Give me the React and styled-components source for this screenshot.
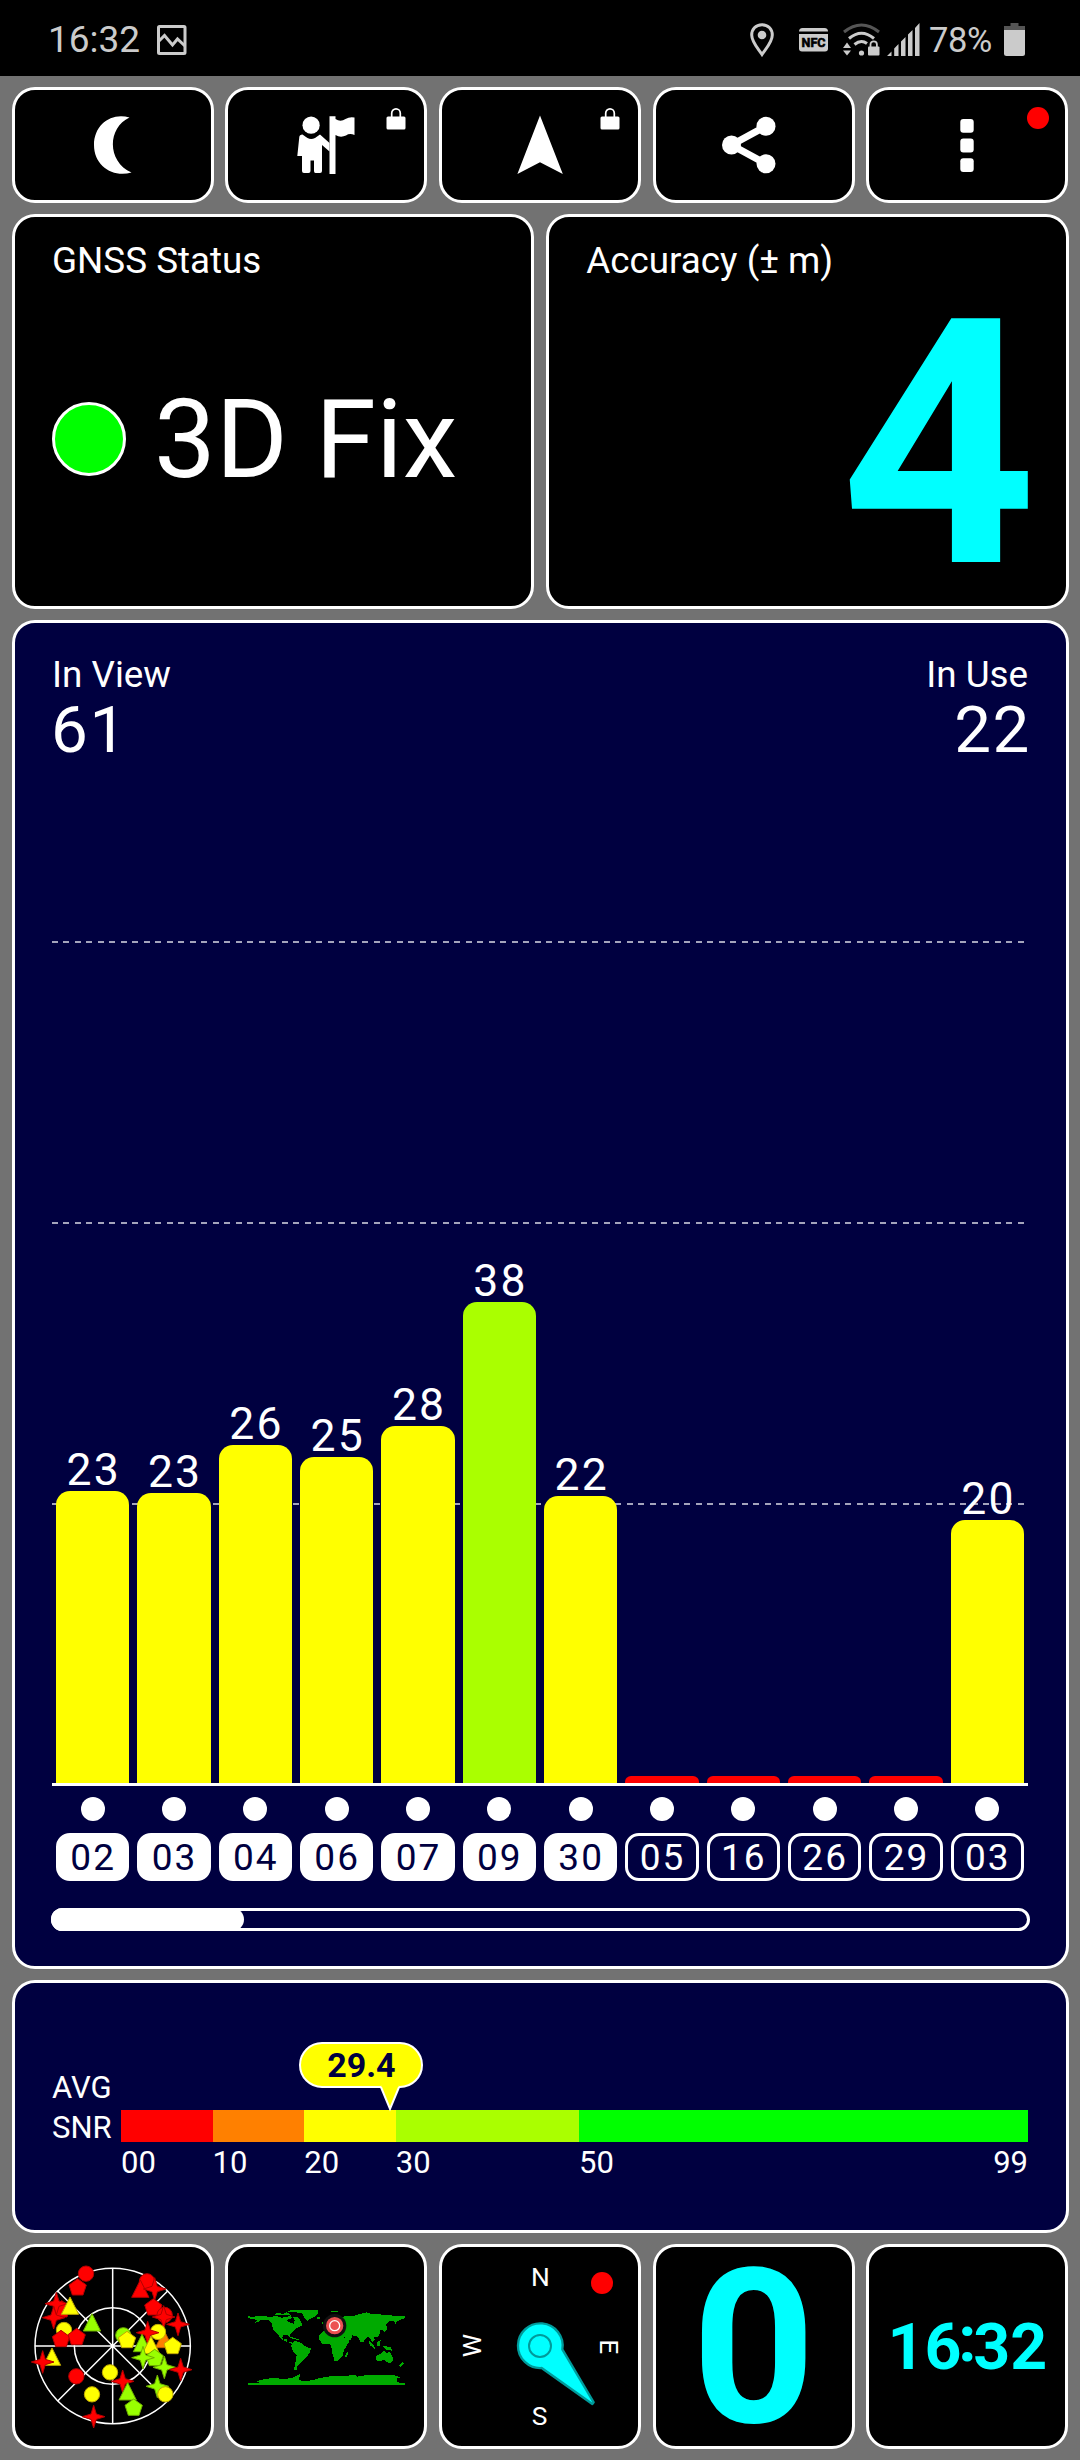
import React from 'react';
import styled, { createGlobalStyle } from 'styled-components';

const GlobalStyle = createGlobalStyle`
    * {
        box-sizing: border-box;
    }

    body {
        margin: 0;
        background: #727272;
        color: white;
        font-family: Roboto, "Liberation Sans", sans-serif;
    }

    svg {
        display: block;
        flex: none;
    }
`;

const Screen = styled.div`
    width: 1080px;
    height: 2460px;
    background: #727272;
`;

const StatusBar = styled.header`
    display: flex;
    align-items: center;
    height: 76px;
    padding: 3px 55px 0 48px;
    background: black;
    color: #cbcbcb;
    font-size: 37px;
    line-height: 44px;
`;

const StatusGroup = styled.div`
    display: flex;
    align-items: center;
    margin-left: ${props => props.$end ? 'auto' : '0'};
`;

const StatusIcon = styled.svg`
    margin-left: ${props => props.$gap}px;
`;

const Percent = styled.span`
    width: 64px;
    margin-left: 9px;
    font-size: 34.5px;
    letter-spacing: -0.4px;
    white-space: nowrap;
`;

const Page = styled.main`
    display: flex;
    flex-direction: column;
    gap: 11px;
    padding: 11px 11.5px;
`;

const Row = styled.section`
    display: grid;
    grid-template-columns: repeat(${props => props.$columns}, 1fr);
    grid-template-rows: minmax(0, 1fr);
    gap: 11.5px;
    height: ${props => props.$height}px;
`;

const Tile = styled.div`
    position: relative;
    display: flex;
    align-items: center;
    justify-content: center;
    border: 3px solid white;
    border-radius: 23px;
    background: black;
`;

const Lock = styled.svg`
    position: absolute;
    top: 18px;
    right: 18px;
`;

const Alert = styled.i`
    position: absolute;
    top: ${props => props.$top}px;
    right: ${props => props.$right}px;
    width: 22px;
    height: 22px;
    border-radius: 50%;
    background: #f00;
`;

const Card = styled(Tile)`
    display: block;
    height: ${props => props.$height ? `${props.$height}px` : 'auto'};
    padding: ${props => props.$top}px 37.5px 0;
    background: ${props => props.$navy ? '#000040' : 'black'};
`;

const Label = styled.div`
    font-size: 36.8px;
    line-height: 40px;
`;

const FixRow = styled.div`
    display: flex;
    align-items: center;
    height: 130px;
    margin-top: 93px;
    font-size: 110px;
    line-height: 130px;
    white-space: nowrap;
`;

const FixText = styled.span`
    padding-top: 2px;
`;

const FixLight = styled.div`
    width: 74px;
    height: 74px;
    margin-right: 28px;
    border: 3px solid white;
    border-radius: 50%;
    background: #0f0;
`;

const Accuracy = styled.div`
    color: #0ff;
    font-size: 343px;
    font-weight: bold;
    line-height: 328px;
    text-align: right;
    margin-right: -9px;
`;

const ChartHead = styled.div`
    display: flex;
    justify-content: space-between;
    height: 109px;
`;

const Count = styled.div`
    text-align: ${props => props.$end ? 'right' : 'left'};
`;

const CountValue = styled.div`
    margin: 0 -3px 0 -1px;
    font-size: 65.5px;
    line-height: 70px;
    letter-spacing: 1.6px;
`;

const Plot = styled.div`
    position: relative;
    height: 1022px;
    border-bottom: 3px solid white;
`;

const GridLine = styled.div`
    position: absolute;
    left: 0;
    right: 0;
    bottom: ${props => props.$bottom}px;
    height: 2px;
    background: repeating-linear-gradient(90deg, #a4a4bc 0 6px, transparent 6px 11.5px);
`;

const Columns = styled.div`
    position: relative;
    display: grid;
    grid-template-columns: repeat(12, 1fr);
    height: ${props => props.$tall ? '100%' : 'auto'};
`;

const Column = styled.div`
    display: flex;
    flex-direction: column;
    align-items: center;
    justify-content: flex-end;
    padding: 0 4px;
`;

const BarValue = styled.div`
    height: 51px;
    margin-right: -2.2px;
    font-size: 44.5px;
    line-height: 60px;
    letter-spacing: 2.2px;
`;

const Bar = styled.div`
    width: 100%;
    border-radius: ${props => props.$low ? '6px 6px 0 0' : '14px 14px 0 0'};
    background: ${props => props.color};
`;

const Dot = styled.div`
    width: 24px;
    height: 24px;
    margin: 11px 0 11.5px;
    border-radius: 50%;
    background: white;
`;

const SatId = styled.div`
    width: 100%;
    height: 48px;
    padding-left: 1px;
    border: 3px solid white;
    border-radius: 14px;
    background: ${props => props.$used ? 'white' : 'transparent'};
    color: ${props => props.$used ? '#000040' : 'white'};
    font-size: 37px;
    line-height: 43px;
    letter-spacing: 2px;
    text-align: center;
`;

const ScrollTrack = styled.div`
    height: 23px;
    margin: 27px -1.5px 0;
    border: 3px solid white;
    border-radius: 12px;
`;

const ScrollThumb = styled.div`
    width: 193px;
    height: 23px;
    margin: -3px;
    border-radius: 12px;
    background: white;
`;

const SnrRow = styled.div`
    display: flex;
    font-size: 31px;
    line-height: 40px;
`;

const SnrTitle = styled.div`
    width: 69px;
    flex: none;
    padding-top: 0.8px;
`;

const Scale = styled.div`
    position: relative;
    display: flex;
    flex: 1;
    padding-top: 43px;
`;

const Segment = styled.div`
    flex: ${props => props.$span} 0 0;
`;

const SegmentFill = styled.div`
    height: 32px;
    background: ${props => props.color};
`;

const SegmentTicks = styled.div`
    display: flex;
    justify-content: space-between;
    padding-top: 1px;
`;

const Bubble = styled.div`
    position: absolute;
    top: -25px;
    width: 124px;
    height: 46px;
    transform: translateX(-91px);
    border: 2px solid white;
    border-radius: 23px;
    background: #ff0;
    color: #000040;
    font-size: 34px;
    font-weight: bold;
    line-height: 42px;
    text-align: center;
`;

const BubbleTail = styled.svg`
    position: absolute;
    top: 40px;
    left: 78px;
`;

const Speed = styled.div`
    padding-top: 5px;
    color: #0ff;
    font-size: 215px;
    font-weight: bold;
    line-height: 190px;
`;

const Clock = styled.div`
    color: #0ff;
    font-size: 64.5px;
    font-weight: bold;
    line-height: 74px;
    white-space: nowrap;
`;

const Colon = styled.span`
    display: inline-block;
    margin: 0 -3.3px;
    line-height: 0;
    transform: translateY(-0.12em);
`;

const satellites = [
    { id: '02', snr: 23, height: 292, color: '#ff0', used: true },
    { id: '03', snr: 23, height: 290, color: '#ff0', used: true },
    { id: '04', snr: 26, height: 338, color: '#ff0', used: true },
    { id: '06', snr: 25, height: 326, color: '#ff0', used: true },
    { id: '07', snr: 28, height: 357, color: '#ff0', used: true },
    { id: '09', snr: 38, height: 481, color: '#af0', used: true },
    { id: '30', snr: 22, height: 287, color: '#ff0', used: true },
    { id: '05', height: 7, color: '#f00' },
    { id: '16', height: 7, color: '#f00' },
    { id: '26', height: 7, color: '#f00' },
    { id: '29', height: 7, color: '#f00' },
    { id: '03', snr: 20, height: 263, color: '#ff0' },
];

const segments = [
    { from: '00', span: 10, color: '#f00' },
    { from: '10', span: 10, color: '#ff8000' },
    { from: '20', span: 10, color: '#ff0' },
    { from: '30', span: 20, color: '#af0' },
    { from: '50', span: 49, color: '#0f0', to: '99' },
];

const RED = '#f00';
const YELLOW = '#ff0';
const LIME = '#9f0';

// shape, x, y, color - drawn in this order
const sky = [
    ['circle', 228, 101, RED], ['penta', 203, 142, RED],
    ['circle', 411, 124, RED], ['tri', 391, 149, RED], ['star', 434, 147, RED],
    ['penta', 155, 208, RED], ['star', 139, 191, RED], ['tri', 180, 200, YELLOW],
    ['star', 131, 233, RED], ['tri', 246, 250, LIME],
    ['circle', 162, 270, YELLOW], ['penta', 153, 297, RED], ['penta', 200, 291, RED],
    ['penta', 430, 202, RED], ['circle', 464, 225, RED], ['star', 461, 231, RED],
    ['star', 504, 253, RED], ['tri', 462, 300, '#ff8000'],
    ['circle', 444, 276, YELLOW], ['star', 413, 278, RED],
    ['circle', 340, 286, LIME], ['penta', 351, 300, YELLOW],
    ['tri', 396, 312, LIME], ['tri', 423, 318, YELLOW], ['penta', 488, 318, YELLOW],
    ['penta', 434, 354, LIME], ['star', 399, 353, LIME], ['star', 463, 382, LIME],
    ['star', 512, 389, RED], ['tri', 126, 353, YELLOW], ['star', 98, 366, RED],
    ['circle', 199, 409, RED], ['circle', 300, 397, YELLOW], ['star', 338, 424, RED],
    ['circle', 246, 463, YELLOW], ['tri', 353, 457, LIME], ['star', 442, 439, LIME],
    ['circle', 466, 463, YELLOW], ['penta', 371, 503, LIME], ['star', 251, 530, RED],
];

const shapes = {
    circle: 'M-23 0a23 23 0 1 0 46 0a23 23 0 1 0 -46 0z',
    penta: 'M0 -26L26 -7L16 23H-16L-26 -7z',
    tri: 'M0 -29L26 23H-26z',
    star: 'M0 -34L8 -8L34 0L8 8L0 34L-8 8L-34 0L-8 -8z',
};

const outline = { [RED]: '#b40000', [YELLOW]: '#c0a800', [LIME]: '#6fb000', '#ff8000': '#c06000' };

function SkyPlot() {
    return (
        <svg width="196" height="199" viewBox="15 21 588 597">
            <g fill="none" stroke="white" strokeWidth="4.5">
                <circle cx="308" cy="318" r="233" />
                <circle cx="308" cy="318" r="115" />
                <path d="M308 85V551M75 318H541M143 153L473 483M473 153L143 483" />
            </g>
            {sky.map(([shape, x, y, color], i) => (
                <path key={i} d={shapes[shape]} transform={`translate(${x} ${y})`}
                    fill={color} stroke={outline[color]} strokeWidth="3" />
            ))}
        </svg>
    );
}

function WorldMap() {
    return (
        <svg width="196" height="199" viewBox="24 21 588 597">
            <g fill="#0a0" shapeRendering="crispEdges">
                <path d="M84 226L92 231H103L108 228H130L150 231L170 228L185 233L200 231L212 226L217 235L207 237L200 242L212 248L222 251L224 240L220 232L230 230L240 240L247 255L238 262L228 264L220 275L210 284L209 293L204 286L190 286L186 292L190 299L200 297L202 305L212 306L220 309L214 311L198 304L182 296L174 284L162 272L156 258L155 248L145 240L125 239L118 244L104 249L112 241L102 238L84 234z" />
                <path d="M160 222L178 219L190 222L200 217L212 222L206 226L188 226L172 226z" />
                <path d="M200 212L240 210H295L292 224L280 232L262 242L254 234L248 221L228 217L205 215z" />
                <path d="M202 290L222 293L240 300L224 298z" />
                <path d="M290 232H300V236H290z" />
                <path d="M215 312L225 303L240 307L255 318L273 326L268 340L258 352L250 360L240 370L232 380L230 390L222 389L226 370L230 345L218 332L214 320z" />
                <path d="M306 276L318 272L320 250L345 234L375 229L392 228L410 226L418 222L440 217L455 222L480 223L500 226L530 227L555 228V235L542 239L530 246L526 252L522 242L508 243L498 252L502 266L494 275L486 268L480 272L478 285L472 292L462 291L464 300L456 306L450 294L443 290L434 298L430 308L422 306L414 290L402 288L396 284L394 298L382 303L372 290L364 280L342 278z" />
                <path d="M298 284L310 275L340 276L365 280L374 294L380 302L389 302L380 318L372 330L368 348L354 362L344 364L338 344L334 320L328 311L308 312L298 300z" />
                <path d="M377 340L384 336L382 350L376 350z" />
                <path d="M446 302L462 318L466 328L450 316zM470 306L482 300L480 318L470 318zM484 316L512 322L516 332L496 328zM488 268L500 264L492 276zM474 292L482 304L478 300z" />
                <path d="M468 348L480 342L492 333L500 340L508 334L519 352L518 364L510 371L500 366L492 360L480 364L469 361z" />
                <path d="M548 366L552 370L540 381L538 376z" />
                <path d="M84 429H120L110 425L120 420L150 415L200 416L222 412L238 402L242 402L236 418L250 424L280 420L300 414L330 409L370 408L406 405L412 410L440 405H520L542 412L530 416L532 425L542 429H555V435H84z" />
                <path d="M334 214H354V217H334zM386 258H390V270H386zM306 246H310V252H306z" />
            </g>
            <circle cx="344" cy="257" r="35" fill="#111" />
            <circle cx="344" cy="257" r="26" fill="#ec5252" />
            <circle cx="344" cy="257" r="15" fill="none" stroke="white" strokeWidth="4" />
        </svg>
    );
}

function Compass() {
    return (
        <svg width="196" height="199" viewBox="36 21 588 597">
            <g fill="white" fontSize="79" textAnchor="middle">
                <text x="331" y="138">N</text>
                <text x="329" y="554">S</text>
                <text transform="translate(509 320) rotate(90)" x="0" y="0">E</text>
                <text transform="translate(153 317) rotate(-90)" x="0" y="0">W</text>
            </g>
            <path d="M397 328A67 67 0 1 0 335 384L487 492L491 487z" fill="#0ff" stroke="#009a9a" strokeWidth="7" strokeLinejoin="round" />
            <circle cx="330" cy="318" r="33" fill="none" stroke="#009a9a" strokeWidth="6" />
        </svg>
    );
}

function LockBadge() {
    return (
        <Lock width="20" height="22" viewBox="0 0 20 22">
            <rect x="0.5" y="8.5" width="19" height="13" rx="1.5" fill="white" />
            <path d="M5.7 9V5.2a4.3 4.3 0 0 1 8.6 0V9" fill="none" stroke="white" strokeWidth="1.7" />
        </Lock>
    );
}

function Toolbar() {
    return (
        <Row $columns={5} $height={116}>
            <Tile>
                <svg width="38" height="58" viewBox="93 116 38 58">
                    <path d="M128.5 117.5C106 128 106 162 130.5 172.5C112 178 93 166 93 145C93 124 111 112 128.5 117.5z" fill="white" />
                </svg>
            </Tile>
            <Tile>
                <svg width="58" height="58" viewBox="297.5 116 58 58" fill="white">
                    <circle cx="311.6" cy="125.2" r="8.6" />
                    <path d="M303 134.5Q306 136.5 308 138Q311.5 140 315.5 138L320.5 134.5L330 143V151.5L322.5 145V171Q322.5 173 320.5 173H316Q314.5 173 314.5 171V160.5H311V171Q311 173 309 173H304.5Q302.5 173 302.5 171V156H297.8L299.8 137Q300 134.5 303 134.5z" />
                    <path d="M330 116.2H336V119Q341 122.5 346 119Q350 116.5 355 117.5V135Q350 133 346.5 135.5Q341 138 336 135V174H330z" />
                </svg>
                <LockBadge />
            </Tile>
            <Tile>
                <svg width="46" height="60" viewBox="517 115 46 60">
                    <path d="M540 115.5L562.8 174L540 162.3L517.4 174z" fill="white" />
                </svg>
                <LockBadge />
            </Tile>
            <Tile>
                <svg width="64" height="58" viewBox="722 116.5 64 58" fill="white">
                    <path d="M766 126.7L731.5 145.5L766 164.3" fill="none" stroke="white" strokeWidth="7" />
                    <circle cx="731.5" cy="145.5" r="9.5" />
                    <circle cx="766" cy="126.7" r="9.5" />
                    <circle cx="766" cy="164.3" r="9.5" />
                </svg>
            </Tile>
            <Tile>
                <svg width="14" height="53" viewBox="0 0 14 53" fill="white">
                    <rect x="0.3" y="0" width="13.4" height="13.8" rx="3" />
                    <rect x="0.3" y="19.6" width="13.4" height="13.8" rx="3" />
                    <rect x="0.3" y="39.2" width="13.4" height="13.8" rx="3" />
                </svg>
                <Alert $top={17} $right={16} />
            </Tile>
        </Row>
    );
}

function PhoneStatus() {
    return (
        <StatusBar>
            <StatusGroup>
                16:32
                <StatusIcon $gap={17} width="30" height="30" viewBox="0 0 30 30">
                    <rect x="1.5" y="1.5" width="26.5" height="27" rx="1" fill="none" stroke="#cbcbcb" strokeWidth="3" />
                    <path d="M2 16L7.5 10.5L15.5 20L20.5 14L28 21" fill="none" stroke="#cbcbcb" strokeWidth="3" />
                </StatusIcon>
            </StatusGroup>
            <StatusGroup $end>
                <StatusIcon $gap={0} width="24" height="34" viewBox="0 0 24 34">
                    <path d="M12 1.7C5.5 1.7 1.7 6.5 1.7 12C1.7 19 8 25.5 12 31.5C16 25.5 22.3 19 22.3 12C22.3 6.5 18.5 1.7 12 1.7z" fill="none" stroke="#cbcbcb" strokeWidth="3" />
                    <circle cx="12" cy="12" r="4.3" fill="#cbcbcb" />
                </StatusIcon>
                <StatusIcon $gap={25} width="29" height="24" viewBox="0 0 29 24">
                    <path d="M0 3.5Q0 0 3.5 0H25.5Q29 0 29 3.5z" fill="#cbcbcb" />
                    <path d="M0 6H29V20.5Q29 23.5 26 23.5H3Q0 23.5 0 20.5z" fill="#cbcbcb" />
                    <text x="14.5" y="19.3" fontSize="12.5" fontWeight="bold" textAnchor="middle" stroke="black" strokeWidth="0.6">NFC</text>
                </StatusIcon>
                <StatusIcon $gap={15.5} width="37" height="34" viewBox="0 0 37 34" fill="none" strokeWidth="3">
                    <path d="M1 9Q18.5 -5 36 9" stroke="#555" />
                    <path d="M6 15.5Q18.5 5 31 15.5M11.5 21.5Q18 16 24 20.5" stroke="#cbcbcb" />
                    <circle cx="18.5" cy="30" r="2.6" fill="#cbcbcb" />
                    <path d="M0 25L4 19.5L8 25zM0 27.5H8L4 32.5z" fill="#cbcbcb" />
                    <rect x="25" y="23.5" width="11.5" height="9" rx="1" fill="#cbcbcb" />
                    <path d="M27.5 24V21.5a3.2 3.2 0 0 1 6.4 0V24" stroke="#cbcbcb" strokeWidth="1.8" />
                </StatusIcon>
                <StatusIcon $gap={7} width="33" height="34" viewBox="0 0 33 34" fill="#cbcbcb">
                    <path d="M0 33L4.5 28.5V33zM7.2 33V25.5L11.5 21V33zM14 33V18.5L18.5 14V33zM21 33V11.5L25.5 7V33zM28 33V5L32.5 0V33z" />
                </StatusIcon>
                <Percent>78%</Percent>
                <StatusIcon $gap={11} width="21" height="33" viewBox="0 0 21 33">
                    <path d="M0 3H6.5V0H14.5V3H21V8H0z" fill="#555" />
                    <path d="M0 7H21V30.5Q21 33 18.5 33H2.5Q0 33 0 30.5z" fill="#cbcbcb" />
                </StatusIcon>
            </StatusGroup>
        </StatusBar>
    );
}

function SatelliteChart() {
    return (
        <Card $navy $height={1349} $top={32}>
            <ChartHead>
                <Count>
                    <Label>In View</Label>
                    <CountValue>61</CountValue>
                </Count>
                <Count $end>
                    <Label>In Use</Label>
                    <CountValue>22</CountValue>
                </Count>
            </ChartHead>
            <Plot>
                <GridLine $bottom={278} />
                <GridLine $bottom={559} />
                <GridLine $bottom={840} />
                <Columns $tall>
                    {satellites.map((sat, i) => (
                        <Column key={i}>
                            {sat.snr && <BarValue>{sat.snr}</BarValue>}
                            <Bar color={sat.color} $low={!sat.snr} style={{ height: sat.height }} />
                        </Column>
                    ))}
                </Columns>
            </Plot>
            <Columns>
                {satellites.map((sat, i) => (
                    <Column key={i}>
                        <Dot />
                        <SatId $used={sat.used}>{sat.id}</SatId>
                    </Column>
                ))}
            </Columns>
            <ScrollTrack>
                <ScrollThumb />
            </ScrollTrack>
        </Card>
    );
}

function SnrScale({ value }) {
    return (
        <Card $navy $height={253} $top={84}>
            <SnrRow>
                <SnrTitle>AVG<br />SNR</SnrTitle>
                <Scale>
                    {segments.map(seg => (
                        <Segment key={seg.from} $span={seg.span}>
                            <SegmentFill color={seg.color} />
                            <SegmentTicks>
                                <span>{seg.from}</span>
                                {seg.to && <span>{seg.to}</span>}
                            </SegmentTicks>
                        </Segment>
                    ))}
                    <Bubble style={{ left: `${value / 99 * 100}%` }}>
                        {value}
                        <BubbleTail width="24" height="28" viewBox="0 0 24 28">
                            <path d="M1.5 2L11 25L20.5 2" fill="#ff0" stroke="white" strokeWidth="2" />
                            <path d="M2.5 0H19.5V3H2.5z" fill="#ff0" />
                        </BubbleTail>
                    </Bubble>
                </Scale>
            </SnrRow>
        </Card>
    );
}

export default function App() {
    return (
        <Screen>
            <GlobalStyle />
            <PhoneStatus />
            <Page>
                <Toolbar />
                <Row $columns={2} $height={395}>
                    <Card $top={24}>
                        <Label>GNSS Status</Label>
                        <FixRow><FixLight /><FixText>3D Fix</FixText></FixRow>
                    </Card>
                    <Card $top={24}>
                        <Label>Accuracy (± m)</Label>
                        <Accuracy>4</Accuracy>
                    </Card>
                </Row>
                <SatelliteChart />
                <SnrScale value={29.4} />
                <Row $columns={5} $height={205}>
                    <Tile><SkyPlot /></Tile>
                    <Tile><WorldMap /></Tile>
                    <Tile><Compass /><Alert $top={25} $right={25} /></Tile>
                    <Tile><Speed>0</Speed></Tile>
                    <Tile><Clock>16<Colon>:</Colon>32</Clock></Tile>
                </Row>
            </Page>
        </Screen>
    );
}
